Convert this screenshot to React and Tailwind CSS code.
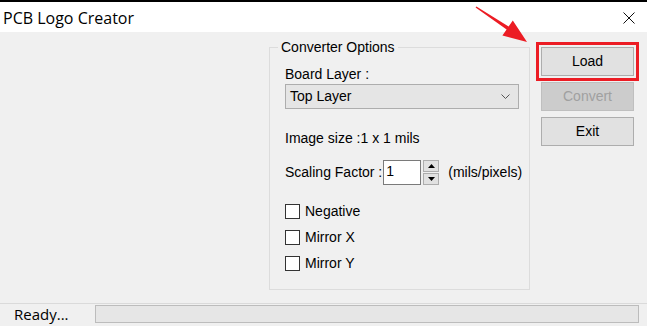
import React from 'react';

const sans = { fontFamily: '"Liberation Sans", Arial, sans-serif' };
const ui = { fontFamily: '"Open Sans", "Noto Sans", sans-serif' };

const Check = ({ label }) => (
    <div className="flex items-center h-[16px]">
        <span className="w-[15px] h-[15px] border border-[#333333] bg-white" />
        <span className="ml-[5px] text-[14px] leading-[16px] text-black">{label}</span>
    </div>
);

const Btn = ({ children, disabled, highlight }) => (
    <button
        className={
            disabled
                ? 'h-[29px] w-[93px] bg-[#cccccc] border border-[#bfbfbf] text-[#a0a0a0] text-[14px]'
                : highlight
                ? 'h-[29px] w-[93px] bg-[#e1e1e1] border border-[#adadad] text-black text-[14px] outline-[3px] outline-solid outline-[#ec1c24] outline-offset-[2px]'
                : 'h-[29px] w-[93px] bg-[#e1e1e1] border border-[#adadad] text-black text-[14px]'
        }
    >
        {children}
    </button>
);

export default function App() {
    return (
        <div className="relative w-[647px] h-[326px] bg-[#f0f0f0] overflow-hidden flex flex-col" style={sans}>
            {/* Title bar */}
            <div className="h-[32px] bg-white border-t-2 border-black flex items-center justify-between pl-[3px] pr-[12px]">
                <span className="text-[16px] text-black leading-none mt-[1px]" style={ui}>PCB Logo Creator</span>
                <svg width="12" height="12" viewBox="0 0 12 12" className="mt-[2px]">
                    <path d="M0.5 0.5 L11.5 11.5 M11.5 0.5 L0.5 11.5" stroke="#111" strokeWidth="1" fill="none" />
                </svg>
            </div>

            {/* Body */}
            <div className="flex-1 flex">
                {/* Converter options group */}
                <div className="relative ml-[269px] mt-[15px] w-[261px] h-[243px] border border-[#dcdcdc]">
                    <span className="absolute -top-[9px] left-[8px] px-[3px] bg-[#f0f0f0] text-[14px] leading-[16px] text-black">
                        Converter Options
                    </span>
                    <div className="pl-[15px] pt-[18px] flex flex-col">
                        <span className="text-[14px] leading-[16px] text-black">Board Layer :</span>
                        <div className="mt-[2px] w-[234px] h-[25px] bg-[#e5e5e5] border border-[#adadad] flex items-center justify-between pl-[4px] pr-[8px]">
                            <span className="text-[14px] text-black">Top Layer</span>
                            <svg width="9" height="5" viewBox="0 0 9 5">
                                <path d="M0.5 0.5 L4.5 4.5 L8.5 0.5" stroke="#555" strokeWidth="1" fill="none" />
                            </svg>
                        </div>
                        <span className="mt-[21px] text-[14px] leading-[16px] text-black">Image size :1 x 1 mils</span>
                        <div className="mt-[14px] flex items-center h-[25px]">
                            <span className="text-[14px] text-black">Scaling Factor :</span>
                            <div className="ml-[1px] w-[38px] h-[25px] bg-white border border-[#7a7a7a] pl-[2px] text-[14px] leading-[20px] text-black">
                                1
                            </div>
                            <div className="ml-[2px] flex flex-col gap-[1px]">
                                <div className="w-[16px] h-[12px] bg-[#e1e1e1] border border-[#adadad] flex items-center justify-center">
                                    <svg width="7" height="4" viewBox="0 0 7 4"><path d="M0 4 L3.5 0 L7 4 Z" fill="#000" /></svg>
                                </div>
                                <div className="w-[16px] h-[12px] bg-[#e1e1e1] border border-[#adadad] flex items-center justify-center">
                                    <svg width="7" height="4" viewBox="0 0 7 4"><path d="M0 0 L3.5 4 L7 0 Z" fill="#000" /></svg>
                                </div>
                            </div>
                            <span className="ml-[9px] text-[14px] text-black">(mils/pixels)</span>
                        </div>
                        <div className="mt-[18px] flex flex-col gap-[10px]">
                            <Check label="Negative" />
                            <Check label="Mirror X" />
                            <Check label="Mirror Y" />
                        </div>
                    </div>
                </div>

                {/* Buttons */}
                <div className="ml-[11px] mt-[15px] flex flex-col gap-[6px]">
                    <Btn highlight>Load</Btn>
                    <Btn disabled>Convert</Btn>
                    <Btn>Exit</Btn>
                </div>
            </div>

            {/* Status bar */}
            <div className="h-[23px] border-t border-[#dadada] flex items-start">
                <span className="pl-[14px] w-[95px] text-[15px] leading-[20px] text-black" style={ui}>Ready...</span>
                <div className="mt-[1px] w-[544px] h-[18px] bg-[#e6e6e6] border border-[#bcbcbc]" />
            </div>

            {/* Red annotation arrow */}
            <svg className="absolute left-0 top-0 pointer-events-none" width="647" height="326" viewBox="0 0 647 326">
                <polygon
                    points="475.6,7.5 476.4,6.5 508.6,26.6 512.8,20.4 527,42 502.4,35.6 506.6,29.4"
                    fill="#ec1c24"
                />
            </svg>
        </div>
    );
}
